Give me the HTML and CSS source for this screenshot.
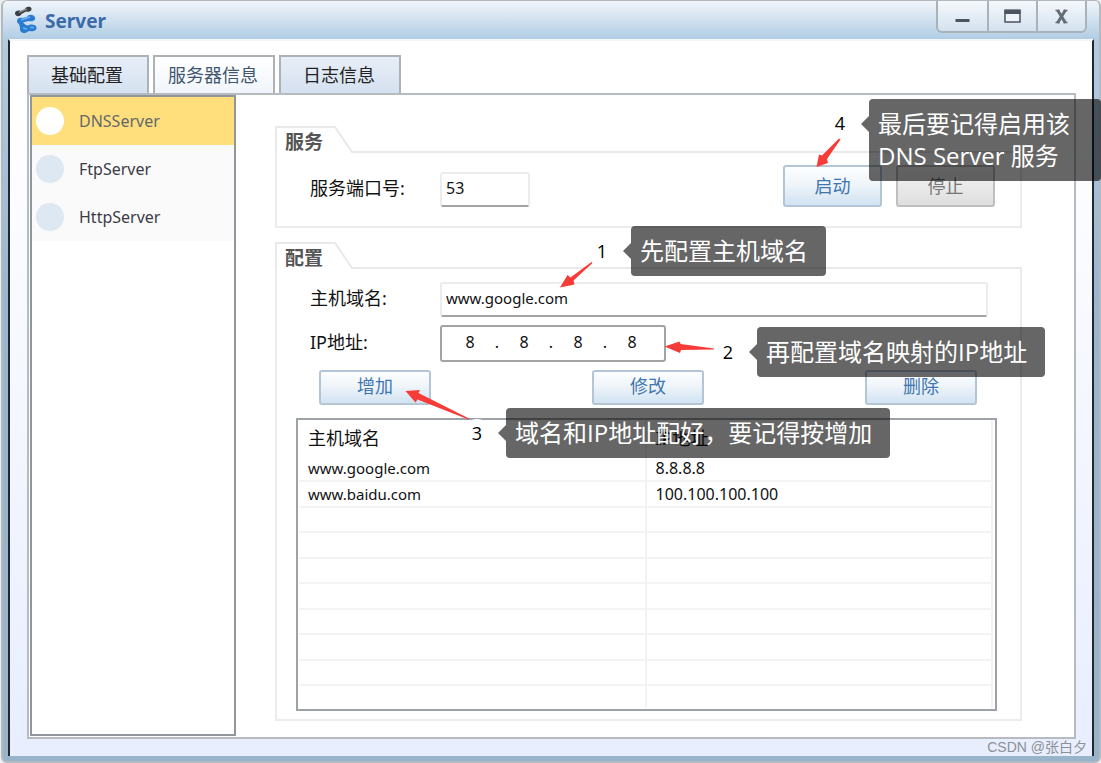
FILE: index.html
```html
<!DOCTYPE html>
<html lang="zh-CN">
<head>
<meta charset="utf-8">
<title>Server</title>
<link rel="stylesheet" href="styles.css">
</head>
<body>
<div class="window">
  <header class="titlebar">
    <svg class="logo" width="24" height="28" viewBox="0 0 24 28" aria-hidden="true">
      <path d="M1 7.500c0-3 4-3.500 5.500-2.500l4.500-2c1-3 6-3 6.500-.5s-3 4-5.500 3L7.500 8C6 11 1.500 11 1 7.500z" fill="#3a3d41"/>
      <path d="M5 6.500l8-3.500" stroke="#9b9fa4" stroke-width="1.200"/>
      <path d="M3 15c0-3 3-4 5-3l5-1c1-3 7-3 8 .5s-4 4.500-6.500 3.500L9 16.500c2 2 3 3 5 3 2-1.500 8-1.500 8.500 2s-5 4.500-7 3.500c-1.500 0-3 2.500-6 2s-4-3-3.500-5.500L5 18c-1-.5-2-1.500-2-3z" fill="#2a7cd0"/>
      <path d="M7 14l9-3M9 22l4 1M16 21.500h4" stroke="#6fb0ee" stroke-width="1.500" fill="none"/>
    </svg>
    <h1 class="title">Server</h1>
    <div class="controls">
      <button class="control" type="button" aria-label="最小化"><svg width="18" height="18" viewBox="0 0 18 18"><path d="M1.500 13.500h14" stroke="#4c545f" stroke-width="3"/></svg></button>
      <button class="control" type="button" aria-label="最大化"><svg width="18" height="18" viewBox="0 0 18 18"><path d="M1 3.500h15v11.500h-15z" fill="#eef3f9" stroke="#4c545f" stroke-width="1.500"/><path d="M.5 2.500h16v4.500h-16z" fill="#4c545f"/></svg></button>
      <button class="control" type="button" aria-label="关闭"><svg width="18" height="18" viewBox="0 0 18 18"><path d="M4.500 3l8 13M12.500 3l-8 13" stroke="#646c76" stroke-width="3"/><path d="M2.500 3.500h4M10.500 3.500h4M2.500 15.500h4M10.500 15.500h4" stroke="#646c76" stroke-width="1.500"/></svg></button>
    </div>
  </header>

  <main class="client">
    <nav class="tabs">
      <button class="tab" type="button">基础配置</button>
      <button class="tab tab-active" type="button">服务器信息</button>
      <button class="tab" type="button">日志信息</button>
    </nav>
    <div class="panel">
      <ul class="servers">
        <li><button class="server server-active" type="button"><span class="dot"></span>DNSServer</button></li>
        <li><button class="server" type="button"><span class="dot"></span>FtpServer</button></li>
        <li><button class="server" type="button"><span class="dot"></span>HttpServer</button></li>
      </ul>

      <div class="settings">
        <section class="group">
          <div class="group-head">
            <h2 class="legend"><svg class="notch" width="78" height="27" viewBox="0 0 78 27" aria-hidden="true"><path d="M1 27V1h59l17 25h1" fill="none" stroke="#e9e9e9" stroke-width="2"/></svg><span class="legend-text">服务</span></h2>
          </div>
          <div class="group-body service">
            <label class="label" for="port">服务端口号:</label>
            <input class="field port" id="port" value="53">
            <div class="power">
              <button class="button button-large" type="button">启动</button>
              <button class="button button-large button-off" type="button">停止</button>
            </div>
          </div>
        </section>

        <section class="group group-fill">
          <div class="group-head">
            <h2 class="legend"><svg class="notch" width="78" height="27" viewBox="0 0 78 27" aria-hidden="true"><path d="M1 27V1h59l17 25h1" fill="none" stroke="#e9e9e9" stroke-width="2"/></svg><span class="legend-text">配置</span></h2>
          </div>
          <div class="group-body config">
            <div class="row">
              <label class="label" for="host">主机域名:</label>
              <input class="field host" id="host" value="www.google.com">
            </div>
            <div class="row">
              <label class="label" for="ip1">IP地址:</label>
              <div class="ip">
                <input class="octet" id="ip1" value="8"><span class="point">.</span>
                <input class="octet" aria-label="IP 2" value="8"><span class="point">.</span>
                <input class="octet" aria-label="IP 3" value="8"><span class="point">.</span>
                <input class="octet" aria-label="IP 4" value="8">
              </div>
            </div>
            <div class="actions">
              <button class="button" type="button">增加</button>
              <button class="button" type="button">修改</button>
              <button class="button" type="button">删除</button>
            </div>
            <div class="records">
              <table class="table">
                <thead><tr><th>主机域名</th><th>IP地址</th></tr></thead>
                <tbody>
                  <tr><td class="domain">www.google.com</td><td>8.8.8.8</td></tr>
                  <tr><td class="domain">www.baidu.com</td><td>100.100.100.100</td></tr>
                  <tr><td></td><td></td></tr>
                  <tr><td></td><td></td></tr>
                  <tr><td></td><td></td></tr>
                  <tr><td></td><td></td></tr>
                  <tr><td></td><td></td></tr>
                  <tr><td></td><td></td></tr>
                  <tr><td></td><td></td></tr>
                  <tr><td></td><td></td></tr>
                </tbody>
              </table>
            </div>
          </div>
        </section>
      </div>
    </div>
  </main>

  <div class="watermark">CSDN @张白夕</div>
</div>

<svg class="arrows" width="1101" height="763" viewBox="0 0 1101 763" aria-hidden="true">
  <g fill="#f73b38">
    <path d="M591.500 262l1 1-19 17.500 1 4-14.500 3 7.500-12.500 3 2.500z"/>
    <path d="M714 348.500v1l-33 .5-1 3-15.500-6.500 15-5 1 2.500z"/>
    <path d="M469 418.500l-.500 1-51-20-2 3-10-11.500 14.500-1-1.500 3z"/>
    <path d="M839 138.500l1.500 1-13.500 19.500 1 4-11.500 4 2.500-12.500 3 1z"/>
  </g>
</svg>
<div class="note note-1"><span class="number">1</span><p class="callout">先配置主机域名</p></div>
<div class="note note-2"><span class="number">2</span><p class="callout">再配置域名映射的IP地址</p></div>
<div class="note note-3"><span class="number">3</span><p class="callout">域名和IP地址配好，要记得按增加</p></div>
<div class="note note-4"><span class="number">4</span><p class="callout">最后要记得启用该<br>DNS Server 服务</p></div>
</body>
</html>
```
FILE: styles.css
```css
* { box-sizing: border-box; }

body {
  margin: 0;
  background: #eceef0;
  color: #111;
  font: 16px/20px "Noto Sans", "Noto Sans CJK SC", sans-serif;
  overflow: hidden;
}

button, input { font: inherit; color: inherit; margin: 0; }
h1, h2, p, ul { margin: 0; padding: 0; }

.window {
  position: relative;
  display: flex;
  flex-direction: column;
  min-height: 100vh;
  margin-left: 1px;
  padding: 0 5px 5px;
  border: 2px solid #b3babf;
  border-top-width: 1px;
  border-radius: 6px;
  background: linear-gradient(#f1f5fb, #b1cde4 38px, #98b6cf 300px, #98b4cb);
}

/* title bar */
.titlebar { display: flex; align-items: flex-start; height: 38px; padding: 0 7px 0 6px; }
.logo { margin-top: 5px; }
.title {
  flex: 1;
  padding: 8px 0 0 7px;
  color: #3a6ba8;
  font-size: 19px;
  line-height: 24px;
}
.controls {
  display: flex;
  border: 2px solid #a9b2bb;
  border-top: 0;
  border-radius: 0 0 6px 6px;
  background: linear-gradient(#f5f8fc, #d3e2ef);
}
.control {
  display: flex;
  align-items: center;
  justify-content: center;
  width: 49px;
  height: 30px;
  padding: 0;
  border: 0;
  background: none;
}
.control + .control { border-left: 2px solid #a9b2bb; }

/* client area */
.client {
  flex: 1;
  display: flex;
  flex-direction: column;
  padding: 14px 16px 17px 17px;
  border: 2px solid #24282c;
  border-top-color: #f4f7fa;
  border-bottom: 0;
  background: linear-gradient(#fff 60px, #e8eefe);
}
.tabs { display: flex; gap: 4px; }
.tab {
  width: 122px;
  height: 38px;
  padding: 0 2px 0 0;
  border: 2px solid #adb2b6;
  border-bottom: 0;
  background: linear-gradient(#e8eef7, #d5e1f0);
  color: #222;
  font-size: 18px;
}
.tab-active { background: linear-gradient(#fff, #f1f5fb); color: #41566e; }
.panel {
  flex: 1;
  display: flex;
  padding: 0 52px 1px 1px;
  border: 2px solid #b6bbbf;
  background: #fff;
}
.servers {
  width: 206px;
  border: 2px solid #90969b;
  list-style: none;
}
.server {
  display: flex;
  align-items: center;
  gap: 15px;
  width: 100%;
  height: 48px;
  padding: 0 4px;
  border: 0;
  background: #fafafa;
  color: #3c3c48;
}
.server-active { background: #ffdf7c; color: #64686c; }
.dot { width: 28px; height: 28px; border-radius: 50%; background: #dde8f3; }
.server-active .dot { background: #fff; }

/* grouped settings */
.settings {
  flex: 1;
  display: flex;
  flex-direction: column;
  gap: 14px;
  padding: 31px 0 15px 39px;
}
.group { display: flex; flex-direction: column; }
.group-fill { flex: 1; }
.group-head { display: flex; height: 27px; }
.group-head::after { content: ""; flex: 1; border-bottom: 2px solid #e9e9e9; }
.legend { position: relative; width: 78px; padding: 6px 0 0 10px; }
.legend-text { display: block; color: #555; font-size: 19px; line-height: 20px; }
.notch { position: absolute; inset: 0; }
.group-body { border: 2px solid #ececec; border-top: 0; }

.label { width: 130px; padding-bottom: 4px; font-size: 18px; line-height: 24px; }
.field {
  height: 35px;
  padding: 0 4px 4px;
  border: 2px solid #ececec;
  border-bottom-color: #a3a3a3;
  border-radius: 3px;
  background: #fff;
}
.service { display: flex; align-items: center; height: 75px; padding: 0 25px 0 33px; }
.port { width: 90px; }
.power { display: flex; gap: 14px; margin: 0 0 8px auto; }

.config { flex: 1; display: flex; flex-direction: column; padding: 13px 0 8px; }
.row { display: flex; align-items: center; padding: 0 32px 8px 33px; }
.host { flex: 1; font-size: 15px; }
.ip {
  display: flex;
  align-items: center;
  width: 226px;
  height: 37px;
  padding: 0 3px 4px 4px;
  border: 2px solid #a3a3a3;
  border-radius: 3px;
}
.octet { width: 48px; padding: 0; border: 0; background: none; text-align: center; }
.point { width: 6px; text-align: center; }

.actions { display: flex; justify-content: space-between; padding: 0 43px 13px 42px; }
.button {
  width: 112px;
  height: 35px;
  padding: 0 0 4px;
  border: 2px solid #b4c5d6;
  border-radius: 3px;
  background: linear-gradient(#fdfeff, #eff5fa 45%, #d2e3f2);
  color: #3f75ae;
  font-size: 18px;
}
.button-large { width: 99px; height: 42px; padding: 0; }
.button-off { border-color: #bfbfbf; background: linear-gradient(#f6f6f6, #dedede); color: #777; }

/* record list */
.records {
  flex: 1;
  margin: 0 23px 0 19px;
  padding: 0 2px 0 1px;
  border: 2px solid #9da2a9;
}
.table { width: 100%; border-collapse: collapse; table-layout: fixed; }
.table th, .table td {
  height: 25px;
  padding: 0 8px 0 9px;
  border-right: 2px solid #f3f3f3;
  text-align: left;
}
.table th { height: 36px; font-size: 18px; font-weight: 400; }
.table td { border-bottom: 2px solid #f3f3f3; line-height: 20px; }
.table tr:nth-child(even) td { height: 26px; }
.table tr:last-child td { height: 23px; border-bottom: 0; }
.table .domain { font-size: 15px; }

.watermark {
  position: absolute;
  right: 12px;
  bottom: 4px;
  color: #8d9096;
  font: 14px/20px "Liberation Sans", "Noto Sans CJK SC", sans-serif;
}

/* tutorial annotations drawn over the window */
.arrows { position: absolute; left: 0; top: 0; pointer-events: none; }
.note { position: absolute; display: flex; align-items: center; font-family: "Open Sans", "Noto Sans CJK SC", sans-serif; }
.number {
  width: 28px;
  height: 28px;
  border-radius: 50%;
  background: #fff;
  color: #000;
  font-size: 18px;
  line-height: 28px;
  text-align: center;
}
.callout {
  position: relative;
  margin-left: 15px;
  padding: 9px 18px 9px 9px;
  border-radius: 4px;
  background: rgba(0, 0, 0, .6);
  color: #fff;
  font-size: 24px;
  line-height: 32px;
  white-space: nowrap;
}
.callout::before {
  content: "";
  position: absolute;
  right: 100%;
  top: 17px;
  border: solid transparent;
  border-width: 8px 8px 8px 0;
  border-right-color: rgba(0, 0, 0, .6);
}
.note-1 { left: 588px; top: 226px; }
.note-2 { left: 714px; top: 327px; }
.note-3 { left: 463px; top: 408px; }
.note-4 { left: 826px; top: 99px; align-items: flex-start; }
.note-4 .number { margin-top: 10px; }
.note-4 .callout { padding-right: 31px; }
```
